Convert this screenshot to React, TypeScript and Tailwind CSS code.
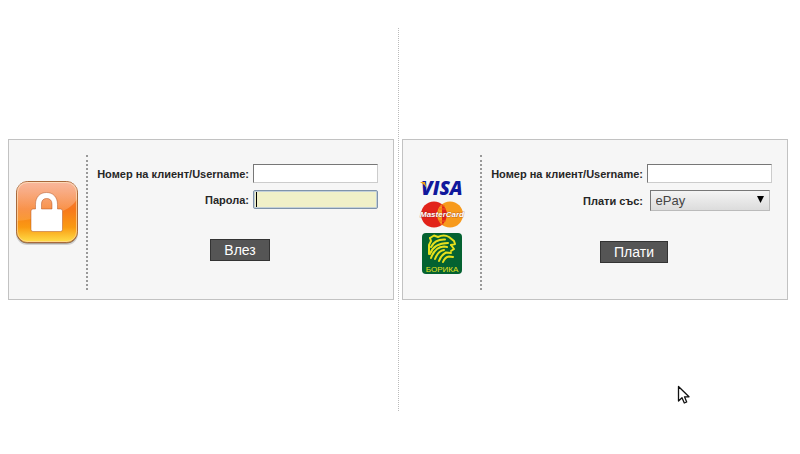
import { useState } from "react";
import type { ReactNode } from "react";

function LockIcon() {
  return (
    <svg width="64" height="74" viewBox="0 -8 64 74" aria-hidden="true">
      <defs>
        <linearGradient id="lock-bg" x1="0" y1="0" x2="0" y2="1">
          <stop offset="0" stopColor="#f4875c" />
          <stop offset="0.45" stopColor="#f7771c" />
          <stop offset="0.75" stopColor="#fa9a12" />
          <stop offset="1" stopColor="#ffe04a" />
        </linearGradient>
        <linearGradient id="lock-shine" x1="0" y1="0" x2="0" y2="1">
          <stop offset="0" stopColor="#fff" stopOpacity="0.4" />
          <stop offset="1" stopColor="#fff" stopOpacity="0.12" />
        </linearGradient>
      </defs>
      <rect x="1" y="3" width="62" height="62" rx="11" fill="#000" opacity="0.15" />
      <rect x="1.5" y="2.5" width="61" height="61" rx="11" fill="#6a5030" opacity="0.7" />
      <rect x="1.5" y="1.5" width="61" height="61" rx="11" fill="url(#lock-bg)" stroke="#a8683a" />
      <rect x="2.5" y="2.5" width="59" height="59" rx="10" fill="none" stroke="#ffd9a0" strokeOpacity="0.7" />
      <path
        d="M12 2H52Q62 2 62 12V19C56 30 40 37 2 41V12Q2 2 12 2Z"
        fill="url(#lock-shine)"
      />
      <path
        d="M20.500 29V24.500C20.500 17 25 12.500 31.500 12.500S42.500 17 42.500 24.500V29H45.500Q47.500 29 47.500 31V49.500Q47.500 51.500 45.500 51.500H18Q16 51.500 16 49.500V31Q16 29 18 29ZM26.500 29H37V24C37 20.500 35 18.500 31.700 18.500S26.500 20.500 26.500 24Z"
        fill="#fff"
        fillRule="evenodd"
        stroke="#a8491a"
        strokeOpacity="0.45"
      />
    </svg>
  );
}

function CardLogos() {
  return (
    <svg width="50" height="104" viewBox="0 -8 50 104" role="img" aria-label="VISA, MasterCard, БОРИКА">
      {/* Visa */}
      <text x="5" y="15" fontFamily="Open Sans, sans-serif" fontSize="19" fontWeight="800" fontStyle="italic" fill="#10189c">
        VISA
      </text>
      <path d="M4 2H9L10.500 8Q8 4 4 2Z" fill="#f0a318" />

      {/* MasterCard */}
      <circle cx="18" cy="34.500" r="13" fill="#e2231a" />
      <circle cx="34" cy="34.500" r="13" fill="#f79a1c" />
      <path d="M26 24.300A13 13 0 0 1 26 44.700Z" fill="#e2231a" />
      <path d="M24 26H29M23 29H30M23 41H30M24 44H28" stroke="#f0651a" strokeWidth="1" />
      <text x="26" y="37" textAnchor="middle" fontFamily="Liberation Sans, sans-serif" fontSize="8" fontWeight="700" fontStyle="italic" fill="#fff" stroke="#7a1a14" strokeWidth="1" strokeOpacity="0.4" paintOrder="stroke">
        MasterCard
      </text>

      {/* Borika */}
      <rect x="6" y="53" width="40" height="41" rx="4" fill="#046231" />
      <g fill="none" stroke="#e6e01c" strokeWidth="2" strokeLinecap="round" strokeLinejoin="round">
        <path d="M14 58L18 55.500L22 57Q28 54 33 57L38 61L39 64L35 65" />
        <path d="M14 58L15 61L13 65V74" />
        <path d="M15 67Q19 59 29 59.500" />
        <path d="M14 74Q18 63 32 63" />
        <path d="M15 78Q19 67 28 66.500L31 67" />
        <path d="M19 79Q22 71 28 70" />
        <path d="M23 81Q25 75 30 72.500L35 73" />
        <path d="M27 82Q29 77 33 76.500L37 77" />
        <path d="M35 65L38 69L35 71" />
      </g>
      <text x="26" y="92" textAnchor="middle" fontFamily="Liberation Sans, sans-serif" fontSize="8" fill="#e6e01c">
        БОРИКА
      </text>
    </svg>
  );
}

function Panel({ icon, children }: { icon: ReactNode; children: ReactNode }) {
  return (
    <section className="flex min-w-0 flex-1 border border-[#c2c2c2] bg-[#f6f6f6] pt-[15px] pr-[15px] pb-[9px]">
      <div className="flex w-[77px] shrink-0 justify-center pt-[17px] pr-[2px]">{icon}</div>
      <div className="h-[135px] shrink-0 border-l-2 border-dotted border-[#999]" />
      <div className="flex flex-1 justify-end pt-[9px]">{children}</div>
    </section>
  );
}

const gridClass = "grid grid-cols-[147px_auto] items-center gap-x-1 gap-y-[7px]";
const labelClass = "justify-self-end text-[11px] leading-4 font-bold whitespace-nowrap text-[#262626]";
const inputClass =
  "h-[19px] w-[125px] border border-t-[#777] border-r-[#ccc] border-b-[#ccc] border-l-[#777] bg-white px-[3px] text-xs outline-none";
const buttonClass =
  "h-[22px] cursor-pointer border border-[#333] bg-[#555] px-[13px] text-sm leading-5 text-white hover:bg-[#444]";

export default function App() {
  const [client, setClient] = useState("");
  const [password, setPassword] = useState("");
  const [payer, setPayer] = useState("");

  return (
    <main className="flex items-center bg-white pt-7 pr-3 pl-2 font-['Liberation_Sans',Arial,sans-serif]">
      <Panel icon={<LockIcon />}>
        <form className="flex flex-col items-center gap-[30px]" onSubmit={(e) => e.preventDefault()}>
          <div className={gridClass}>
            <label htmlFor="login-client" className={labelClass}>
              Номер на клиент/Username:
            </label>
            <input id="login-client" type="text" className={inputClass} value={client} onChange={(e) => setClient(e.target.value)} />
            <label htmlFor="login-password" className={labelClass}>
              Парола:
            </label>
            <div className="relative flex">
              <input
                id="login-password"
                type="password"
                className="peer h-[19px] w-[125px] rounded-xs border border-[#7f93ab] bg-[#f0f0c8] px-[3px] text-xs shadow-[inset_0_0_0_1px_#c3d0d8] outline-none"
                value={password}
                onChange={(e) => setPassword(e.target.value)}
              />
              {/* resting caret, replaced by the real one on focus */}
              <span className="pointer-events-none absolute top-[2px] left-[3px] h-[15px] w-px bg-black peer-focus:hidden" />
            </div>
          </div>
          <button type="submit" className={buttonClass}>
            Влез
          </button>
        </form>
      </Panel>

      <div className="flex h-[383px] w-2 shrink-0 justify-center">
        <div className="border-l border-dotted border-[#bbb]" />
      </div>

      <Panel icon={<CardLogos />}>
        <form className="flex flex-col items-center gap-[30px]" onSubmit={(e) => e.preventDefault()}>
          <div className={gridClass}>
            <label htmlFor="pay-client" className={labelClass}>
              Номер на клиент/Username:
            </label>
            <input id="pay-client" type="text" className={inputClass} value={payer} onChange={(e) => setPayer(e.target.value)} />
            <label htmlFor="pay-method" className={labelClass}>
              Плати със:
            </label>
            <div className="relative flex justify-center">
              <select
                id="pay-method"
                className="h-[21px] w-[120px] appearance-none border border-t-[#777] border-r-[#bbb] border-b-[#bbb] border-l-[#777] bg-linear-to-b from-[#f4f4f4] to-[#dcdcdc] pl-[5px] text-[13px] leading-4 text-[#444] outline-none"
              >
                <option>ePay</option>
              </select>
              <svg className="pointer-events-none absolute top-[6px] right-[8px]" width="7" height="7" viewBox="0 0 7 7" aria-hidden="true">
                <path d="M0 0H7L3.500 7Z" fill="#000" />
              </svg>
            </div>
          </div>
          <button type="submit" className={buttonClass}>
            Плати
          </button>
        </form>
      </Panel>

      {/* mouse pointer */}
      <svg className="pointer-events-none absolute top-[385px] left-[677px]" width="14" height="20" viewBox="0 0 14 20" aria-hidden="true">
        <path
          d="M1.500 1.500V16L5 12.700L7.300 18L9.700 17L7.500 11.800H12Z"
          fill="#fff"
          stroke="#111"
          strokeWidth="1.300"
          strokeLinejoin="round"
        />
      </svg>
    </main>
  );
}
